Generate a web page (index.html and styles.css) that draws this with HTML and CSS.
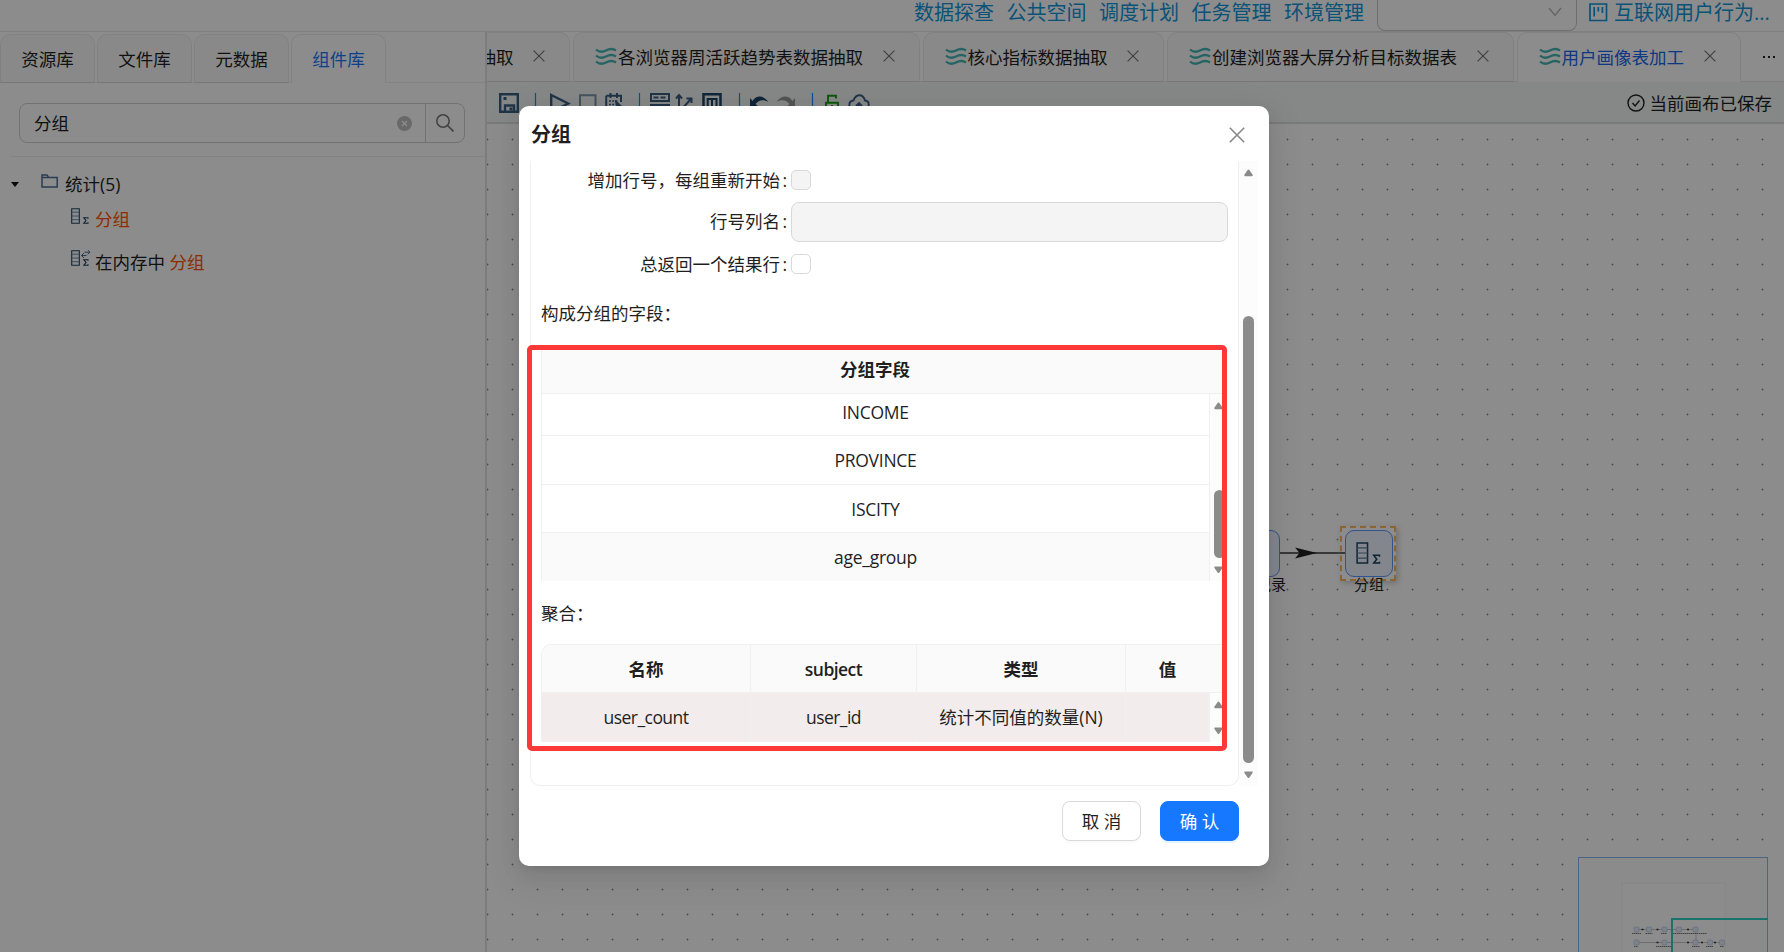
FILE: index.html
```html
<!DOCTYPE html>
<html lang="zh-CN">
<head>
  <meta charset="UTF-8" />
  <title>用户画像表加工</title>
  <link rel="stylesheet" href="styles.css">
</head>
<body>

  <svg class="defs">
    <symbol id="wave" viewBox="0 0 22 18">
      <path d="M1 2.500q4.500 4 10 1t10 0M1 8.500q4.500 4 10 1t10 0M1 14.500q4.500 4 10 1t10 0" fill="none" stroke="#45b5b5" stroke-width="2.300" />
    </symbol>
    <symbol id="close" viewBox="0 0 12 12">
      <path d="M.6.6l10.800 10.800M11.400.6L.6 11.400" fill="none" stroke="currentColor" stroke-width="1.200" />
    </symbol>
    <symbol id="group" viewBox="0 0 18 16">
      <path d="M.7.7h7.600v14.600H.7z" fill="none" stroke="#1d4566" stroke-width="1.100" />
      <path d="M.7 4.200h7.600M.7 8h7.600M.7 11.700h7.600" fill="none" stroke="#5f7f9a" stroke-width=".9" />
      <path d="M17 10.700V9.700h-4.200l2.200 2.800-2.200 2.800H17v-1" fill="none" stroke="#1d3f60" stroke-width="1.100" />
    </symbol>
    <symbol id="up" viewBox="0 0 10 8"><path d="M4 .8Q5-.4 6 .8l3.600 5.200Q10 7.500 9 7.500H1Q0 7.500.4 6z" fill="#8b8b8b" /></symbol>
    <symbol id="down" viewBox="0 0 10 8"><path d="M4 6.700Q5 7.900 6 6.700l3.600-5.200Q10 0 9 0H1Q0 0 .4 1.500z" fill="#8b8b8b" /></symbol>
  </svg>

  <header class="topbar">
    <a>数据探查</a>
    <a>公共空间</a>
    <a>调度计划</a>
    <a>任务管理</a>
    <a>环境管理</a>
    <div class="select">
      <svg width="14" height="10" viewBox="0 0 14 10"><path d="M1 1l6 7.500L13 1" fill="none" stroke="#b8b8b8" stroke-width="1.400" /></svg>
    </div>
    <a class="project">
      <svg width="19" height="19" viewBox="0 0 19 19"><path d="M1 1h16.500v16.500H1zM5.200 4v9.500M9.300 4v4.500M13.400 4v6" fill="none" stroke="currentColor" stroke-width="1.700" /></svg>
      互联网用户行为...
    </a>
  </header>

  <main class="main">
    <aside class="side">
      <nav class="lib-tabs">
        <div class="lib-tab">资源库</div>
        <div class="lib-tab">文件库</div>
        <div class="lib-tab">元数据</div>
        <div class="lib-tab active">组件库</div>
      </nav>
      <div class="search">
        <span class="search-text">分组</span>
        <svg class="clear" width="15" height="15" viewBox="0 0 15 15"><circle cx="7.500" cy="7.500" r="7.500" fill="#bfbfbf" /><path d="M5 5l5 5M10 5l-5 5" stroke="#fff" stroke-width="1.300" /></svg>
        <span class="search-btn">
          <svg width="18" height="18" viewBox="0 0 18 18"><circle cx="7" cy="7" r="6.200" fill="none" stroke="#777" stroke-width="1.500" /><path d="M11.500 11.500l6 6" stroke="#777" stroke-width="1.600" /></svg>
        </span>
      </div>
      <div class="tree">
        <div class="tree-root">
          <span class="caret"></span>
          <svg width="17" height="14" viewBox="0 0 17 14"><path d="M1 3.500h15.200V13H1zM1 3.500V.9h5l1.500 2.300" fill="none" stroke="#4a6f90" stroke-width="1.500" /></svg>
          统计(5)
        </div>
        <div class="tree-item">
          <svg width="18" height="16"><use href="#group" width="18" height="16" /></svg>
          <span class="hit">分组</span>
        </div>
        <div class="tree-item">
          <svg width="20" height="16" viewBox="0 0 20 16"><use href="#group" width="18" height="16" /><path d="M10.500 5.500h5M13 3l-2.500 2.500L13 8M13.500 2.200h5.500M16.800 0L19 2.200l-2.200 2.200" fill="none" stroke="#4a6f90" stroke-width="1" /></svg>
          <span>在内存中 <span class="hit">分组</span></span>
        </div>
      </div>
    </aside>

    <section class="work">
      <nav class="doc-tabs">
        <div class="doc-tab cut"><span>抽取</span><svg class="x"><use href="#close" /></svg></div>
        <div class="doc-tab"><svg class="wave"><use href="#wave" /></svg><span>各浏览器周活跃趋势表数据抽取</span><svg class="x"><use href="#close" /></svg></div>
        <div class="doc-tab"><svg class="wave"><use href="#wave" /></svg><span>核心指标数据抽取</span><svg class="x"><use href="#close" /></svg></div>
        <div class="doc-tab"><svg class="wave"><use href="#wave" /></svg><span>创建浏览器大屏分析目标数据表</span><svg class="x"><use href="#close" /></svg></div>
        <div class="doc-tab active"><svg class="wave"><use href="#wave" /></svg><span>用户画像表加工</span><svg class="x"><use href="#close" /></svg></div>
        <div class="more"><i></i><i></i><i></i></div>
      </nav>

      <div class="toolbar">
        <svg width="400" height="24" viewBox="0 0 400 24" fill="none" stroke="#3b6084" stroke-width="2">
          <path d="M1.200 1.200h17.600v17.600H1.200zM6 19v-6.500h9V19" stroke-width="2.400" /><path d="M4.500 5.500h3M10.500 16h3" stroke-width="3" />
          <path d="M36.500 0v20M140.500 0v20M240.500 0v20M313.500 0v20" stroke="#1890ff" stroke-width="1.200" />
          <path d="M52.200 2l17 8.500-17 8.500z" stroke-width="2.400" />
          <path d="M81 2.200h15.500v16H81z" stroke="#7d96ad" />
          <path d="M107.200 2.800H122V9M107.200 2.800V19h8M111.500 0v5M118 0v5" stroke-width="2" /><path d="M110 8h9M110 11.500h6M110 15h5" stroke-dasharray="2 1.200" stroke-width="1.700" /><path d="M116.500 7.500l6.500 6h-5v4z" fill="#3b6084" stroke-width="1" />
          <path d="M152 1h18v7h-18zM151 12h20M151 17h20" /><path d="M154.500 4.500h13" stroke-dasharray="5 2" />
          <path d="M180 3v15M177 5.500L180 2l3 3.500M181 18L192 6M187.500 5.500h5V10" stroke-width="2" />
          <path d="M204.500 1.200h17v17h-17z" stroke="#1f4467" stroke-width="2.500" /><path d="M208.700 17V6h8.800v11M213 6v11" stroke="#1f4467" />
          <path d="M251 5v9h9l-3.500-3c3-4 8-5 13-2-5-7-12-7-16-1z" fill="#1f4467" stroke="none" />
          <path d="M296 5v9h-9l3.500-3c-3-4-8-5-13-2 5-7 12-7 16-1z" fill="#9a9a9a" stroke="none" />
          <path d="M327 9.800h12V19h-12zM329 9V2.800h8V5.500M333 12v4" stroke="#1a9e1a" stroke-width="1.900" />
          <path d="M354 16c-5-1-5-8 .5-8.500C357 .5 364 .5 366 7.500c5 .5 5 7.500 0 8.500M360 10v9M357 13l3-3 3 3" stroke-width="1.900" />
        </svg>
        <div class="saved">
          <svg width="18" height="18" viewBox="0 0 18 18"><circle cx="9" cy="9" r="8" fill="none" stroke="#222" stroke-width="1.400" /><path d="M5.500 9l2.600 3 4.400-5.500" fill="none" stroke="#222" stroke-width="1.400" /></svg>
          当前画布已保存
        </div>
      </div>

      <div class="canvas">
        <div class="node prev"></div>
        <div class="node-label prev-label">记录</div>
        <svg class="edge" width="66" height="14" viewBox="0 0 66 14"><path d="M0 7h65" stroke="#333" stroke-width="1.300" /><path d="M15 1.500L37 7 15 12.500 19.500 7z" fill="#222" /></svg>
        <div class="picked"></div>
        <div class="node current"><svg width="25" height="22"><use href="#group" /></svg></div>
        <div class="node-label current-label">分组</div>

        <div class="minimap">
          <svg width="190" height="95" viewBox="0 0 190 95">
            <rect x="43" y="25" width="103" height="90" fill="#fff" stroke="#f4f4f4" />
            <path d="M58 71.500h59M58 84.500h84" stroke="#bbb" stroke-width=".8" />
            <path d="M117 72v12" stroke="#bbb" stroke-width=".8" />
            <g fill="#e6edf9" stroke="#b5c8ea" stroke-width=".7">
              <rect x="55" y="69" width="5" height="5" rx="1" /><rect x="67.500" y="69" width="5" height="5" rx="1" /><rect x="83" y="69" width="5" height="5" rx="1" /><rect x="97.500" y="69" width="5" height="5" rx="1" /><rect x="114" y="69" width="5" height="5" rx="1" />
              <rect x="55" y="82" width="5" height="5" rx="1" /><rect x="83" y="82" width="5" height="5" rx="1" /><rect x="114" y="82" width="5" height="5" rx="1" /><rect x="128.500" y="82" width="5" height="5" rx="1" /><rect x="140.500" y="82" width="5" height="5" rx="1" />
            </g>
            <path d="M62.500 71.500h2M77.500 71.500h2M108 71.500h2M77.500 84.500h2M108 84.500h2M122 84.500h2M135 84.500h2" stroke="#333" stroke-width="1.500" />
            <path d="M53 75.500h9M66.500 75.500h7M82 75.500h6M94 75.500h34M55 88.500h4M77 88.500h16M113 88.500h8M127 88.500h7M141 88.500h4" stroke="#777" stroke-width="1.100" stroke-dasharray="1.500 .5" />
            <path d="M93 95V61h96" fill="none" stroke="#31d0c6" stroke-width="2" />
          </svg>
        </div>
      </div>
    </section>
  </main>

  <div class="mask">
    <div class="modal">
      <div class="modal-head">
        <span>分组</span>
        <svg class="modal-x"><use href="#close" /></svg>
      </div>

      <div class="modal-body">
        <div class="card">
          <div class="field"><label>增加行号，每组重新开始</label><span class="check disabled"></span></div>
          <div class="field tall"><label>行号列名</label><span class="input"></span></div>
          <div class="field"><label>总返回一个结果行</label><span class="check"></span></div>

          <div class="caption first">构成分组的字段：</div>
          <div class="table">
            <div class="thead single">分组字段</div>
            <div class="tbody">
              <div class="rows">
                <div class="row cut-row">INCOME</div>
                <div class="row">PROVINCE</div>
                <div class="row">ISCITY</div>
                <div class="row hover">age_group</div>
              </div>
              <div class="scroll inner">
                <svg class="arrow"><use href="#up" /></svg>
                <span class="thumb"></span>
                <svg class="arrow"><use href="#down" /></svg>
              </div>
            </div>
          </div>

          <div class="caption">聚合：</div>
          <div class="table agg">
            <div class="thead cols"><span>名称</span><span class="latin">subject</span><span>类型</span><span>值</span><span></span></div>
            <div class="tbody">
              <div class="cols data"><span class="latin">user_count</span><span class="latin">user_id</span><span>统计不同值的数量(N)</span><span></span></div>
              <div class="scroll inner">
                <svg class="arrow"><use href="#up" /></svg>
                <svg class="arrow"><use href="#down" /></svg>
              </div>
            </div>
          </div>
        </div>
        <div class="scroll outer">
          <svg class="arrow"><use href="#up" /></svg>
          <span class="thumb"></span>
          <svg class="arrow"><use href="#down" /></svg>
        </div>
      </div>

      <div class="modal-foot">
        <button class="btn">取 消</button>
        <button class="btn primary">确 认</button>
      </div>
      <div class="highlight"></div>
    </div>
  </div>

</body>
</html>
```
FILE: styles.css
```css
* {
  box-sizing: border-box;
}
body {
  margin: 0;
  width: 1784px;
  height: 952px;
  overflow: hidden;
  display: flex;
  flex-direction: column;
  position: relative;
  font-family: "Open Sans", "Noto Sans CJK SC", sans-serif;
  font-size: 17.5px;
  line-height: 28px;
  color: #1f1f1f;
  background: #fff;
}
svg {
  display: block;
  flex: none;
}
.defs {
  position: absolute;
  width: 0;
  height: 0;
}

/* header */
.topbar {
  height: 32px;
  flex: none;
  display: flex;
  justify-content: flex-end;
  gap: 12.5px;
  padding-right: 14px;
  border-bottom: 1px solid #e8e8e8;
  font-size: 20px;
  line-height: 26px;
  color: #1296db;
  white-space: nowrap;
}
.select {
  width: 200px;
  height: 31px;
  border: 1px solid #c8c8c8;
  border-top: 0;
  border-radius: 0 0 8px 8px;
  display: flex;
  justify-content: flex-end;
  padding: 7px 14px 0 0;
}
.project {
  width: 181px;
  display: flex;
  gap: 6px;
}
.project svg {
  margin-top: 3px;
}

.main {
  flex: 1;
  display: flex;
  min-height: 0;
}

/* left panel */
.side {
  width: 487px;
  flex: none;
  border-right: 2px solid #e4e4e4;
}
.lib-tabs {
  display: flex;
  gap: 2px;
  padding-top: 2px;
  height: 51px;
  box-shadow: inset 0 -1px #efefef;
}
.lib-tab {
  width: 95px;
  height: 49px;
  border: 1px solid #ececec;
  border-bottom-color: #d9d9d9;
  border-radius: 10px 10px 0 0;
  background: #fafafa;
  text-align: center;
  line-height: 48px;
}
.lib-tab.active {
  background: #fff;
  border-bottom-color: #fff;
  color: #1677ff;
}
.search {
  width: 446px;
  height: 40px;
  margin: 20px 0 13px 19px;
  border: 1px solid #d0d0d0;
  border-radius: 8px;
  display: flex;
  align-items: center;
  padding-left: 14px;
}
.search-text {
  flex: 1;
}
.clear {
  margin-right: 13px;
}
.search-btn {
  width: 39px;
  height: 38px;
  border-left: 1px solid #d0d0d0;
  display: flex;
  align-items: center;
  justify-content: center;
}
.tree {
  margin-left: 11px;
  padding-top: 13px;
  border-top: 1px solid #efefef;
}
.tree-root {
  display: flex;
  align-items: center;
}
.tree-root svg {
  margin: -7px 7px 0 22px;
}
.caret {
  border: 4px solid transparent;
  border-top: 5px solid #111;
  border-bottom: 0;
}
.tree-item {
  display: flex;
  height: 43px;
  padding: 7px 0 0 60px;
}
.tree-item svg {
  margin-top: 3px;
  width: 20px;
  margin-right: 4px;
}
.tree-item + .tree-item svg {
  margin-top: 2px;
}
.hit {
  color: #ff5500;
}

/* right panel */
.work {
  flex: 1;
  display: flex;
  flex-direction: column;
  min-width: 0;
}
.doc-tabs {
  display: flex;
  gap: 3px;
  height: 50px;
  flex: none;
  white-space: nowrap;
  box-shadow: inset 0 -1px #e6e6e6;
}
.doc-tab {
  height: 50px;
  display: flex;
  align-items: center;
  padding: 0 24px 2px 21px;
  border: 1px solid #ececec;
  border-bottom-color: #d9d9d9;
  border-radius: 10px 10px 0 0;
  background: #fafafa;
}
.doc-tab span {
  padding-top: 2px;
}
.doc-tab.cut {
  width: 83px;
  border-left: 0;
  border-top-left-radius: 0;
  justify-content: flex-end;
  overflow: hidden;
}
.doc-tab.active {
  background: #fff;
  border-bottom-color: #fff;
  color: #1668ee;
}
.wave {
  width: 22px;
  height: 18px;
  margin-right: 1px;
}
.x {
  width: 12px;
  height: 12px;
  margin-left: 19.5px;
  color: #777;
}
.more {
  flex: 1;
  display: flex;
  justify-content: flex-end;
  gap: 3px;
  padding: 24px 9px 0 0;
}
.more i {
  width: 2px;
  height: 2px;
  background: #222;
}
.toolbar {
  height: 42px;
  flex: none;
  display: flex;
  justify-content: space-between;
  padding: 11px 12px 0 12px;
  background: #f2f7f6;
  border-bottom: 2px solid #dcdfdf;
}
.saved {
  display: flex;
  gap: 5px;
  line-height: 21px;
}
.saved svg {
  margin-top: 1px;
}

.canvas {
  flex: 1;
  position: relative;
  overflow: hidden;
  background: radial-gradient(circle at 12.5px 12.5px, #888 0.7px, transparent 1.2px) -12px 3px / 25px 25px #fff;
}
.node {
  position: absolute;
  top: 406px;
  width: 48px;
  height: 47px;
  border: 1.25px solid #5f95ff;
  border-radius: 9px;
  background: #eff4ff;
}
.prev {
  left: 745px;
}
.current {
  left: 858px;
  padding: 11px 0 0 10px;
}
.node-label {
  position: absolute;
  top: 446px;
  font-size: 15px;
}
.prev-label {
  left: 769px;
}
.current-label {
  left: 867px;
}
.edge {
  position: absolute;
  left: 793px;
  top: 422px;
}
.picked {
  position: absolute;
  left: 853px;
  top: 402px;
  width: 56px;
  height: 55px;
  border: 2px dashed #feb663;
  box-shadow: 2px 2px 6px #ccc;
}
.minimap {
  position: absolute;
  left: 1091px;
  top: 733px;
  width: 190px;
  height: 120px;
  border: 1px solid #8ab8f0;
  background: #fdfdfd;
}

/* dialog */
.mask {
  position: absolute;
  inset: 0;
  padding-top: 106px;
  background: rgba(0, 0, 0, 0.45);
}
.modal {
  position: relative;
  width: 750px;
  height: 760px;
  margin-left: 519px;
  border-radius: 10px;
  background: #fff;
  box-shadow: 0 8px 20px rgba(0, 0, 0, 0.08), 0 4px 8px -5px rgba(0, 0, 0, 0.12), 0 11px 35px 10px rgba(0, 0, 0, 0.05);
}
.modal-head {
  height: 55px;
  display: flex;
  justify-content: space-between;
  padding: 15px 24px 0 12px;
  font-size: 20px;
  font-weight: bold;
}
.modal-x {
  width: 16px;
  height: 16px;
  margin-top: 6px;
  color: #888;
}
.modal-body {
  display: flex;
  height: 625px;
  padding-left: 11px;
}
.card {
  width: 709px;
  height: 625px;
  border: 1px solid #f0f0f0;
  border-top: 0;
  border-radius: 0 0 10px 10px;
  padding: 9px 10px 0;
}
.field {
  display: flex;
  align-items: center;
  height: 20px;
}
.field label {
  width: 246px;
  margin-right: 4px;
  text-align: right;
}
.field label::after {
  content: ":";
  margin-left: 2.5px;
}
.tall {
  height: 40px;
  margin: 12px 0;
}
.tall label {
  padding-bottom: 2px;
}
.check {
  width: 20px;
  height: 20px;
  border: 1px solid #d9d9d9;
  border-radius: 5px;
}
.disabled,
.input {
  background: #f4f4f4;
}
.input {
  width: 437px;
  height: 40px;
  border: 1px solid #d9d9d9;
  border-radius: 8px;
}
.caption {
  height: 63px;
  padding-top: 18px;
}
.caption.first {
  height: 75px;
  padding-top: 25px;
}
.table {
  width: 686px;
  border-left: 1px solid #f0f0f0;
  text-align: center;
}
.thead {
  background: #fafafa;
  border-bottom: 1px solid #f0f0f0;
  font-weight: 600;
}
.thead.single {
  height: 45px;
  padding: 6px 19px 0 0;
}
.tbody {
  display: flex;
}
.rows {
  width: 667px;
}
.row {
  height: 49px;
  line-height: 48px;
  border-bottom: 1px solid #f0f0f0;
  letter-spacing: -0.25px;
}
.cut-row {
  height: 42px;
  line-height: 37px;
}
.row:nth-child(3) {
  height: 48px;
}
.row.hover {
  height: 48px;
  line-height: 49px;
  background: #fafafa;
  border-bottom: 0;
}
.latin {
  letter-spacing: -0.55px;
}
.scroll {
  display: flex;
  flex-direction: column;
  justify-content: space-between;
  background: #fcfcfc;
}
.arrow {
  width: 9px;
  height: 8px;
}
.thumb {
  border-radius: 6px;
  background: #8b8b8b;
}
.inner {
  width: 18px;
  padding: 8px 4px 7px;
  border-left: 1px solid #f0f0f0;
}
.inner .thumb {
  width: 11px;
  height: 68px;
  margin: 79px 0 8px;
}
.outer {
  width: 19px;
  padding: 8px 5px 7px 4px;
  align-items: center;
}
.outer .thumb {
  width: 11px;
  height: 447px;
  margin-top: 131px;
}
.agg {
  border-top: 1px solid #f0f0f0;
  border-top-left-radius: 10px;
  overflow: hidden;
}
.cols {
  display: grid;
  grid-template-columns: 209px 166px 209px 83px 18px;
  line-height: 48px;
}
.cols span {
  border-right: 1px solid #f0f0f0;
}
.thead.cols {
  height: 48px;
}
.thead.cols span:nth-child(n+4) {
  border-right: 0;
}
.cols.data {
  grid-template-columns: 209px 166px 209px 83px;
  height: 49px;
  background: #f2ecec;
}
.modal-foot {
  display: flex;
  justify-content: flex-end;
  gap: 19px;
  padding: 15px 30px 0 0;
}
.btn {
  width: 79px;
  height: 40px;
  padding: 0;
  border: 1px solid #d9d9d9;
  border-radius: 8px;
  background: #fff;
  box-shadow: 0 2px 0 rgba(0, 0, 0, 0.02);
  font: inherit;
  color: inherit;
}
.primary {
  border-color: #1677ff;
  background: #1677ff;
  color: #fff;
  box-shadow: 0 2px 0 rgba(5, 145, 255, 0.1);
}
.highlight {
  position: absolute;
  left: 7.5px;
  top: 239px;
  width: 700px;
  height: 406px;
  border: 5px solid #fc3838;
  border-radius: 5px;
}
```
